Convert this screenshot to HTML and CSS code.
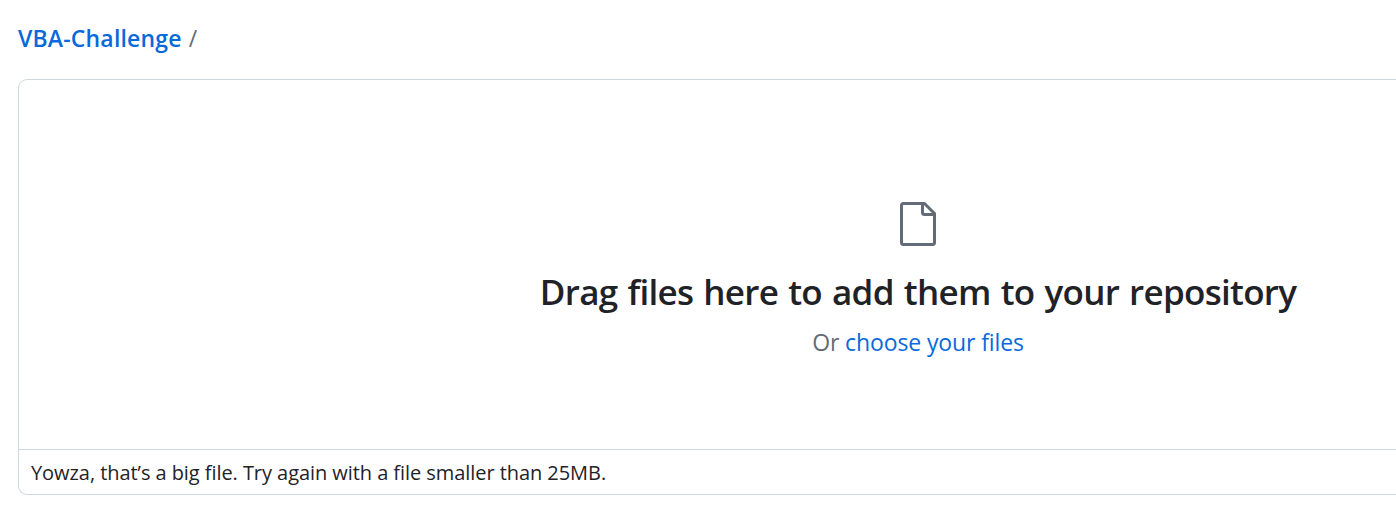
FILE: index.html
```
<!DOCTYPE html>
<html lang="en">
<head>
<meta charset="utf-8">
<title>Upload files</title>
<link rel="stylesheet" href="styles.css">
</head>
<body>
<nav class="breadcrumb"><a class="repo" href="#">VBA-Challenge</a><span class="slash">/</span></nav>
<main class="upload">
  <section class="dropzone">
    <svg class="file-icon" width="38" height="46" viewBox="0 0 38 46" fill="none" stroke="#636c76" stroke-width="3" stroke-linejoin="round">
      <path d="M4.500 2.500H25.500L35.500 12.500V41.500Q35.500 43.500 33.500 43.500H4.500Q2.500 43.500 2.500 41.500V4.500Q2.500 2.500 4.500 2.500Z"/>
      <path d="M23.500 2.500V11.500Q23.500 13.500 25.500 13.500H35.500"/>
    </svg>
    <h1 class="title">Drag files here to add them to your repository</h1>
    <p class="choose">Or <a href="#">choose your files</a></p>
  </section>
  <p class="message">Yowza, that’s a big file. Try again with a file smaller than 25MB.</p>
</main>
</body>
</html>
```
FILE: styles.css
```
* { box-sizing: border-box; }
body {
  margin: 0;
  height: 511px;
  overflow: hidden;
  background: #fff;
  color: #1f2328;
  font-family: "Open Sans", "Noto Sans", sans-serif;
}
a { color: #0969da; text-decoration: none; }
.breadcrumb {
  display: flex;
  gap: 7px;
  height: 79px;
  padding: 21px 0 0 18px;
  font-size: 23px;
  line-height: 34px;
}
.repo {
  font-weight: 600;
  letter-spacing: 0.18px;
}
.slash { color: #636c76; }
.upload {
  height: 416px;
  margin-left: 18px;
  border: 1px solid #d0d7de;
  border-right: 0;
  border-radius: 9px 0 0 9px;
}
.dropzone {
  display: flex;
  flex-direction: column;
  align-items: center;
  height: 370px;
  padding: 121px 0 0 421px;
  border-bottom: 1px solid #d0d7de;
}
.file-icon { display: block; }
.title {
  margin: 19px 0 0;
  font-size: 35px;
  font-weight: 550;
  line-height: 52px;
  letter-spacing: -0.72px;
  word-spacing: 1.7px;
  white-space: nowrap;
}
.choose {
  margin: 7px 0 0;
  color: #636c76;
  font-size: 23px;
  line-height: 34px;
  letter-spacing: -0.12px;
}
.message {
  margin: 0;
  padding-left: 12px;
  font-size: 20px;
  line-height: 45px;
  letter-spacing: -0.06px;
}
```
